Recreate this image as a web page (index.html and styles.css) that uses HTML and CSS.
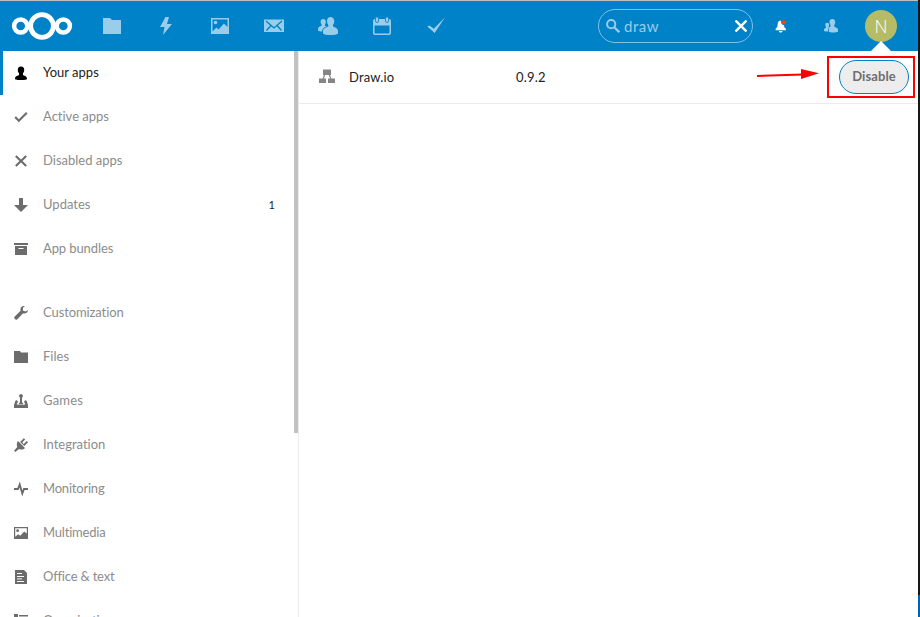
FILE: index.html
```html
<!DOCTYPE html>
<html lang="en">
<head>
<meta charset="utf-8">
<title>Apps</title>
<link rel="stylesheet" href="styles.css">
</head>
<body>
<div class="window">
<header class="header">
  <svg class="logo" viewBox="0 0 62 30" fill="none" stroke="#fff"><circle cx="31" cy="15" r="11.400" stroke-width="4.800"/><circle cx="9.700" cy="15" r="6.600" stroke-width="4.500"/><circle cx="52.300" cy="15" r="6.600" stroke-width="4.500"/></svg>
  <nav class="menu">
    <svg viewBox="0 0 20 20"><path d="M1 2h7l2 2h9v14H1z"/></svg>
    <svg viewBox="0 0 20 20"><path d="M9.500 1 4 11h4.500L7 19l9-11h-5l2-7z"/></svg>
    <svg viewBox="0 0 20 20"><path fill-rule="evenodd" d="M1 2h18v16H1zM2.500 3.500v12l4-4 2 2 5.500-6 3.500 3.500v-7.500z"/><circle cx="5.500" cy="6.500" r="1.800"/></svg>
    <svg viewBox="0 0 20 20"><path d="M0 3.500h20V16H0z"/><path class="cut" d="m2 5 8 7 8-7M2.500 14.500l4.500-5M17.500 14.500l-4.500-5"/></svg>
    <svg viewBox="0 0 20 20"><path d="M12.500 1C10.300 1 9 2.700 9 5c0 2 .8 3 1.300 4v1.500C8.500 11.500 5 12 5 15v2.500c2 2 13 2 15 0V15c0-3-3.300-3.500-5-4.500V9c.6-1 1.300-2 1.300-4 0-2.300-1.500-4-3.800-4zM5.200 3C3.600 3 2.600 4.200 2.600 5.800c0 1.300.6 2.200.9 2.800v1.200C2.200 10.500 0 11 0 13v1.500c1 .7 2.500.9 4 1 .2-3 2.500-4.300 4.500-5.200l-1.500-.6V8.500c.5-.7.9-1.600.9-2.700C7.900 4.200 6.800 3 5.200 3z"/></svg>
    <svg viewBox="0 0 20 20"><path fill-rule="evenodd" d="M3 3h14q2 0 2 2v12q0 2-2 2H3q-2 0-2-2V5q0-2 2-2zm-.5 6.500v7q0 1 1 1h13q1 0 1-1v-7z"/><rect class="tab" x="3.500" y=".8" width="3" height="5.700" rx="1.500"/><rect class="tab" x="13.500" y=".8" width="3" height="5.700" rx="1.500"/></svg>
    <svg viewBox="0 0 20 20"><path d="m1.300 10.500 2.200-1 4.300 3.300L19 1.200 8.700 17z"/></svg>
  </nav>
  <div class="search">
    <svg class="lens" viewBox="0 0 14 14" fill="none" stroke="#99cde9"><circle cx="5.200" cy="5.200" r="4.100" stroke-width="2"/><path d="m8.200 8.200 5.100 5" stroke-width="2.300"/></svg>
    <span class="query">draw</span>
    <svg class="clear" viewBox="0 0 12 12"><path d="m.5.500 11 11M11.500.500l-11 11" stroke="#fff" stroke-width="2.400"/></svg>
  </div>
  <svg class="bell" viewBox="0 0 12 14"><path fill="#fff" d="M5.500 1.500C3.200 2 2.700 3.500 2.600 6 2.500 8.200 1.800 8.700.6 9.800v1.400h10.300V9.800C9.600 8.700 9 8.200 9 6.500zM3.800 12h3.800q-.3 1.500-1.900 1.500T3.800 12z"/><circle cx="8.900" cy="3.300" r="2.700" fill="#0082c9"/><circle cx="8.900" cy="3.300" r="2.100" fill="#ff4402"/></svg>
  <svg class="contacts" viewBox="0 0 14 14" fill="#99cde9"><path d="M8.300 0C6.500 0 5.400 1.300 5.500 3c0 1.600.5 2.400 1 3v1.600C5.300 8.400 4.800 9 4.800 10.500v2.200c1.800 1 6.800 1 9.200 0v-2.500C13.500 8.800 11.500 8.600 10.300 7.600V6c.5-.6.9-1.400.9-3 0-1.700-1.100-3-2.900-3zM3.200 3.800C2 3.800 1.200 4.600 1.300 5.800c0 .9.300 1.500.7 1.900v1C1 9.200 0 9.500 0 10.800V12c1.200.5 2.500.6 4 .5 0-2.200.1-3.300 1.300-4.200l-.8-.6c.4-.5.6-1 .6-1.900 0-1.200-.8-2-1.900-2z"/></svg>
  <div class="avatar">N</div>
</header>
<div class="body">
  <aside class="sidebar">
    <ul class="nav">
      <li class="item active"><svg viewBox="0 0 16 16"><path d="M8 1.500c-2.200 0-3.300 1.500-3.200 3.500 0 1.800.7 2.500 1.200 3.200V10c-.8.800-4 1-4 3.500 0 1 1 1.500 6 1.500s6-.5 6-1.500c0-2.500-3.200-2.700-4-3.500V8.200c.5-.7 1.200-1.400 1.200-3.200.1-2-1-3.500-3.200-3.500z"/></svg><span>Your apps</span></li>
      <li class="item"><svg viewBox="0 0 16 16"><path class="line" d="m2.200 8 3.600 3.700 8-8"/></svg><span>Active apps</span></li>
      <li class="item"><svg viewBox="0 0 16 16"><path class="line" d="m2.800 3 10.400 10M13.200 3 2.800 13"/></svg><span>Disabled apps</span></li>
      <li class="item"><svg viewBox="0 0 16 16"><path d="M6 1h4v7h5l-7 7-7-7h5z"/></svg><span>Updates</span><b class="count">1</b></li>
      <li class="item snug"><svg viewBox="0 0 16 16"><path fill-rule="evenodd" d="M1 2h14v2H1zM2 5h12v9H2zm3.500 2v1h5V7z"/></svg><span>App bundles</span></li>
      <li class="item snug section"><svg viewBox="0 0 16 16"><path d="M10.500 1C8 1.200 7 3.500 7.600 5.800L1.500 11.800c-1 1.400.8 3.700 2.600 2.600l5.800-6c2.300.7 5-.6 5.100-3.400l-2.500 1.500-2.700-1 .2-2.800 2-1.600z"/></svg><span>Customization</span></li>
      <li class="item"><svg viewBox="0 0 16 16"><path d="M1 2h6l1 1.500h7V14H1z"/></svg><span>Files</span></li>
      <li class="item wide"><svg viewBox="0 0 16 16"><path d="M8 1a2 2 0 0 0-1 3.700V9l-2 3h6L9 9V4.700A2 2 0 0 0 8 1zM1 11.500h14V15H1z"/><path d="M3.300 7 5 8.500 3.500 12H1.200L2 8.500zM12.700 7 11 8.500l1.500 3.500h2.300L14 8.500z"/></svg><span>Games</span></li>
      <li class="item"><svg viewBox="0 0 16 16"><path d="m5 4 7 7c-1.500 1.600-4.200 2-6 .9L2.300 15 1 13.700 4.300 10C3.500 8 3.700 5.500 5 4z"/><path d="m7 5 3.800-3.800L12.200 2.500 9.300 5.500l1.400 1.400L13.600 4 15 5.300 11.300 9z"/></svg><span>Integration</span></li>
      <li class="item tight"><svg viewBox="0 0 16 16"><path fill="none" stroke="#6c6c6c" stroke-width="1.900" d="M1 8h4l1.700-4.500 2.600 9L11 8h4"/></svg><span>Monitoring</span></li>
      <li class="item tight"><svg viewBox="0 0 16 16"><path fill-rule="evenodd" d="M1 2h14v12H1zm1.200 1.200v8.500l3-2.500 2 1.500 4-4.200 2.600 2V3.200z"/><circle cx="4.600" cy="5.700" r="1.400"/></svg><span>Multimedia</span></li>
      <li class="item tight"><svg viewBox="0 0 16 16"><path d="M2 1h9l3 3v11H2z"/><path stroke="#fff" d="M4 4.500h5M4 7.500h7M4 9.900h5M4 12.500h7"/></svg><span>Office &amp; text</span></li>
      <li class="item tight"><svg viewBox="0 0 16 16"><path d="M1 1h4v4H1zM6 2h9v1.500H6zM1 6.500h4v4H1zM6 8h9v1.500H6z"/></svg><span>Organization</span></li>
    </ul>
    <div class="scrollbar"></div>
  </aside>
  <main class="content">
    <div class="app-row">
      <svg class="app-icon" viewBox="0 0 16 16"><path d="M4 .5h8V6H4zM0 9.500h7V14H0zM9 9.500h7V14H9z"/><path d="M6 5 4 10M10 5l2 5" stroke="#858585" stroke-width="1.200"/></svg>
      <span class="app-name">Draw.io</span>
      <span class="version">0.9.2</span>
      <svg class="arrow" viewBox="0 0 62 14"><path d="m0 9 46-1.600" stroke="#f00" stroke-width="2"/><path fill="#f00" d="m44 2 18 4.300L44 12z"/></svg>
      <div class="highlight"><button class="disable">Disable</button></div>
    </div>
  </main>
</div>
</div>
<div class="edge"></div>
</body>
</html>
```
FILE: styles.css
```css
* { box-sizing: border-box; }
body { margin: 0; width: 920px; height: 617px; overflow: hidden; display: flex; background: #fff; font: 13px/20px Lato, "Open Sans", sans-serif; font-variant-ligatures: none; color: #222; }
svg { display: block; flex: none; }
.window { width: 918px; height: 617px; display: flex; flex-direction: column; overflow: hidden; }
.edge { width: 2px; height: 617px; background: linear-gradient(#161616 595px, #0062b5 595px); }
.header { height: 51px; flex: none; background: #0082c9; border-top: 1px solid #bcbfc1; display: flex; align-items: center; padding-left: 11px; }
.logo { width: 62px; height: 30px; }
.menu { display: flex; gap: 34px; margin-left: 29px; }
.menu svg { width: 20px; height: 20px; fill: #99cde9; }
.menu .cut { fill: none; stroke: #0082c9; stroke-width: 1.3; }
.menu .tab { stroke: #0082c9; stroke-width: .8; }
.search { width: 155px; height: 34px; margin-left: 152px; border: 1px solid #80c0e4; border-radius: 17px; display: flex; align-items: center; padding: 0 5px 0 7px; }
.lens { width: 14px; height: 14px; }
.query { color: #99cde9; font-size: 15px; margin-left: 4px; flex: 1; letter-spacing: .5px; }
.clear { width: 12px; height: 12px; }
.bell { width: 12px; height: 14px; margin-left: 22px; }
.contacts { width: 14px; height: 14px; margin-left: 37px; }
.avatar { width: 32px; height: 32px; margin-left: 27px; border-radius: 50%; background: #b6bc66; color: #fff; font: 300 18px/32px "Open Sans", Lato, sans-serif; text-align: center; position: relative; }
.avatar::after { content: ""; position: absolute; left: 6px; top: 31px; border: 10px solid transparent; border-top: 0; border-bottom-color: #fff; }
.body { flex: 1; min-height: 0; display: flex; }
.sidebar { width: 299px; border-right: 1px solid #ebebeb; display: flex; overflow: hidden; }
.nav { flex: 1; list-style: none; margin: 0; padding: 0; }
.item { height: 44px; display: flex; align-items: center; border-left: 3px solid transparent; padding: 0 19px 0 10px; color: #8c8c8c; }
.item svg { width: 16px; height: 16px; fill: #6c6c6c; margin-right: 14px; }
.item span { position: relative; top: -1px; white-space: nowrap; }
.item .line { fill: none; stroke: #6c6c6c; stroke-width: 2.1; }
.snug { letter-spacing: -.1px; }
.tight { letter-spacing: -.2px; }
.wide { letter-spacing: .2px; }
.active { border-left-color: #0082c9; color: #222; }
.active svg { fill: #000; }
.section { margin-top: 20px; }
.count { margin-left: auto; font-size: 11px; font-weight: 400; color: #222; }
.scrollbar { width: 4px; height: 382px; background: #c1c1c1; }
.content { flex: 1; }
.app-row { height: 53px; border-bottom: 1px solid #ebebeb; display: flex; align-items: center; padding-left: 20px; }
.app-icon { width: 16px; height: 16px; fill: #858585; }
.app-name { width: 167px; margin-left: 14px; letter-spacing: .15px; }
.version { width: 50px; letter-spacing: .2px; }
.arrow { width: 62px; height: 14px; margin-left: 191px; position: relative; top: -3px; }
.highlight { width: 88px; height: 42px; margin-left: 8px; border: 2px solid #f00; padding: 2px 0 0 10px; }
.disable { width: 70px; height: 34px; padding: 0 0 2px; border: 1px solid #0082c9; border-radius: 17px; background: #ededed; color: #6f6f6f; font: bold 13px Lato, sans-serif; letter-spacing: .1px; }
```
